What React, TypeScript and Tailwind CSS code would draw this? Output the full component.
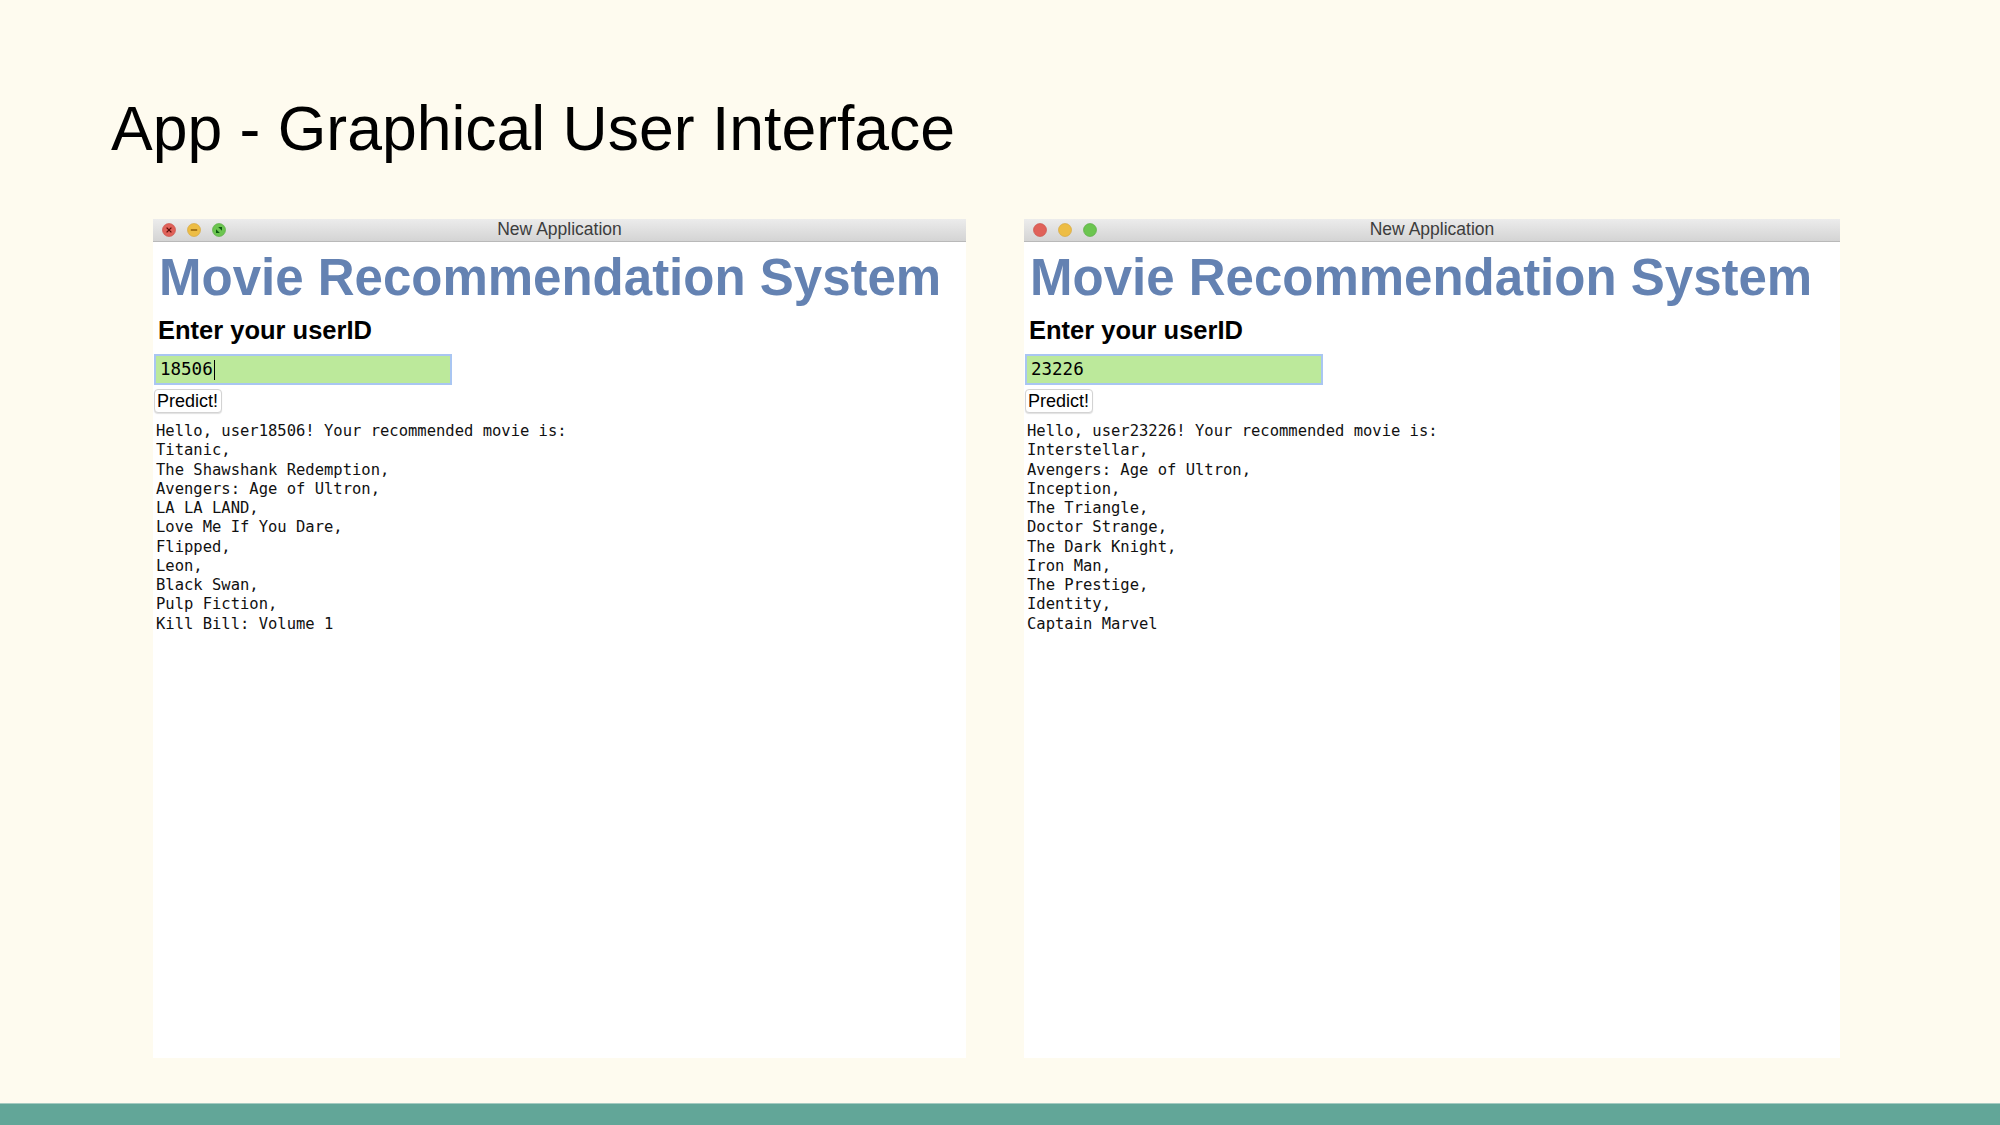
const leftMovies = [
  "Titanic,",
  "The Shawshank Redemption,",
  "Avengers: Age of Ultron,",
  "LA LA LAND,",
  "Love Me If You Dare,",
  "Flipped,",
  "Leon,",
  "Black Swan,",
  "Pulp Fiction,",
  "Kill Bill: Volume 1",
];

const rightMovies = [
  "Interstellar,",
  "Avengers: Age of Ultron,",
  "Inception,",
  "The Triangle,",
  "Doctor Strange,",
  "The Dark Knight,",
  "Iron Man,",
  "The Prestige,",
  "Identity,",
  "Captain Marvel",
];

function TrafficLights({ hover }: { hover: boolean }) {
  return (
    <div className="ml-[9px] flex items-center gap-[11px]">
      <svg width="14" height="14" viewBox="0 0 14 14">
        <circle cx="7" cy="7" r="6.5" fill="#e0625a" stroke="#c9483f" strokeWidth="0.6" />
        {hover && <path d="M4.6 4.6 L9.4 9.4 M9.4 4.6 L4.6 9.4" stroke="#5a0b06" strokeWidth="1.3" />}
      </svg>
      <svg width="14" height="14" viewBox="0 0 14 14">
        <circle cx="7" cy="7" r="6.5" fill="#edbd45" stroke="#d3a133" strokeWidth="0.6" />
        {hover && <path d="M3.8 7 L10.2 7" stroke="#8a5a05" strokeWidth="1.4" />}
      </svg>
      <svg width="14" height="14" viewBox="0 0 14 14">
        <circle cx="7" cy="7" r="6.5" fill="#6cc550" stroke="#52a83a" strokeWidth="0.6" />
        {hover && (
          <>
            <path d="M4 10 L4 6.2 L7.8 10 Z" fill="#0c5a10" />
            <path d="M10 4 L10 7.8 L6.2 4 Z" fill="#0c5a10" />
          </>
        )}
      </svg>
    </div>
  );
}

function AppWindow({
  width,
  userId,
  movies,
  hover,
  caret,
}: {
  width: string;
  userId: string;
  movies: string[];
  hover: boolean;
  caret: boolean;
}) {
  return (
    <div className={`flex h-[839px] ${width} flex-col bg-white`}>
      <div className="relative flex h-[23px] shrink-0 items-center border-b border-[#b9b9b9] bg-gradient-to-b from-[#ececec] to-[#d4d4d4]">
        <TrafficLights hover={hover} />
        <div className="absolute inset-0 flex items-center justify-center text-[17.5px] text-[#3d3d3d] [font-family:'Liberation_Sans',Arial,sans-serif]">
          New Application
        </div>
      </div>
      <div className="flex flex-col items-start [font-family:'Liberation_Sans',Arial,sans-serif]">
        <h1 className="ml-[6px] mt-[10px] text-[51px] font-bold leading-none text-[#6482b2]">
          Movie Recommendation System
        </h1>
        <div className="ml-[5px] mt-[15px] text-[25.5px] font-bold leading-none text-black">
          Enter your userID
        </div>
        <div className="ml-px mt-[11px] flex h-[31px] w-[298px] items-center border-2 border-[#a9c6f2] bg-[#bce99b] pl-[4px] text-[17.5px] text-black [font-family:'DejaVu_Sans_Mono',monospace]">
          <span>{userId}</span>
          {caret && <span className="ml-px h-[20px] w-px bg-black" />}
        </div>
        <button className="ml-px mt-[4px] h-[24px] rounded-[4px] border border-[#d3d3d3] bg-white pl-[2px] pr-[3px] text-[18px] leading-none text-black shadow-[0_1px_1px_rgba(0,0,0,0.12)]">
          Predict!
        </button>
        <div className="ml-[3px] mt-[9px] text-[15.5px] leading-[19.25px] text-[#111] [font-family:'DejaVu_Sans_Mono',monospace]">
          <div>Hello, user{userId}! Your recommended movie is:</div>
          {movies.map((m) => (
            <div key={m}>{m}</div>
          ))}
        </div>
      </div>
    </div>
  );
}

export default function App() {
  return (
    <div className="flex h-[1125px] w-[2000px] flex-col overflow-hidden bg-[#fefbef]">
      <div className="pl-[111px] pt-[97px] text-[62.5px] leading-none text-black [font-family:'Liberation_Sans',Arial,sans-serif]">
        App - Graphical User Interface
      </div>
      <div className="mt-[59px] flex gap-[58px] pl-[153px]">
        <AppWindow width="w-[813px]" userId="18506" movies={leftMovies} hover caret />
        <AppWindow width="w-[816px]" userId="23226" movies={rightMovies} hover={false} caret={false} />
      </div>
      <div className="flex-1" />
      <div className="h-[22px] shrink-0 border-t border-[#a6cbc1] bg-[#62a698]" />
    </div>
  );
}
